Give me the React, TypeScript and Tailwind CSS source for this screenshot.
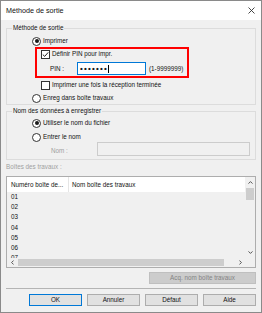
import { useState } from 'react'

function Radio({ checked = false }: { checked?: boolean }) {
  return (
    <span className="flex h-[9px] w-[9px] shrink-0 items-center justify-center rounded-full border border-[#333333] bg-white">
      {checked && <span className="h-[4px] w-[4px] rounded-full bg-[#1a1a1a]" />}
    </span>
  )
}

function Check({ checked = false }: { checked?: boolean }) {
  return (
    <span className="flex h-[9px] w-[9px] shrink-0 items-center justify-center border border-[#333333] bg-white">
      {checked && (
        <svg width="7" height="7" viewBox="0 0 7 7">
          <path d="M0.8 3.6 L2.7 5.4 L6.2 1.4" fill="none" stroke="#222" strokeWidth="1" />
        </svg>
      )}
    </span>
  )
}

function Button({ label, isDefault = false }: { label: string; isDefault?: boolean }) {
  return (
    <button
      type="button"
      className={`flex h-[12px] w-[53px] items-center justify-center bg-[#e1e1e1] text-[#111] ${
        isDefault ? 'border border-[#0078d7]' : 'border border-[#adadad]'
      }`}
    >
      {label}
    </button>
  )
}

const rows = ['01', '02', '03', '04', '05', '06', '07']

export default function App() {
  const [pin] = useState('•••••••')

  return (
    <div className="flex h-[313px] w-[262px] flex-col border border-[#8a8a8a] bg-[#f0f0f0] font-['Liberation_Sans',Arial,sans-serif] text-[6.3px] leading-[8px] text-[#111]">
      {/* barre de titre */}
      <div className="flex h-[19px] shrink-0 items-center justify-between bg-white pl-[5px] pr-[5px]">
        <span className="text-[7.2px]">Méthode de sortie</span>
        <svg width="7" height="7" viewBox="0 0 7 7" className="mr-[1px]">
          <path d="M0.5 0.5 L6.5 6.5 M6.5 0.5 L0.5 6.5" stroke="#333" strokeWidth="0.9" />
        </svg>
      </div>

      <div className="flex flex-col px-[5px]">
        {/* Méthode de sortie */}
        <fieldset className="mt-[4px] h-[81px] border border-[#dcdcdc]">
          <legend className="ml-[5px] px-[1px] leading-[8px]">Méthode de sortie</legend>
          <div className="mt-[4px] flex h-[10px] items-center gap-[2px] pl-[25px]">
            <Radio checked />
            <span>Imprimer</span>
          </div>
          <div className="ml-[28px] mt-[1px] h-[31px] w-[154px] border-2 border-[#ff0000]">
            <div className="flex h-[10px] items-center gap-[2px] pl-[4px]">
              <Check checked />
              <span>Définir PIN pour impr.</span>
            </div>
            <div className="mt-[3px] flex h-[13px] items-center pl-[13px]">
              <span className="w-[27px]">PIN :</span>
              <div className="flex h-[13px] w-[69px] items-center border border-[#0078d7] bg-white pl-[2px]">
                <span className="text-[8px] font-bold leading-[8px] tracking-[1.2px] text-[#1a1a1a]">{pin}</span>
                <span className="h-[8px] w-[1px] bg-black" />
              </div>
              <span className="ml-[3px]">(1-9999999)</span>
            </div>
          </div>
          <div className="mt-[2px] flex h-[10px] items-center gap-[2px] pl-[34px]">
            <Check />
            <span>Imprimer une fois la réception terminée</span>
          </div>
          <div className="mt-[3px] flex h-[10px] items-center gap-[2px] pl-[25px]">
            <Radio />
            <span>Enreg dans boîte travaux</span>
          </div>
        </fieldset>

        {/* Nom des données */}
        <fieldset className="mt-[2px] h-[53px] border border-[#dcdcdc]">
          <legend className="ml-[5px] px-[1px] leading-[8px]">Nom des données à enregistrer</legend>
          <div className="mt-[3px] flex h-[10px] items-center gap-[2px] pl-[25px]">
            <Radio checked />
            <span>Utiliser le nom du fichier</span>
          </div>
          <div className="mt-[4px] flex h-[10px] items-center gap-[2px] pl-[25px]">
            <Radio />
            <span>Entrer le nom</span>
          </div>
          <div className="flex h-[14px] items-center pl-[44px]">
            <span className="mt-[3px] w-[46px] text-[#a0a0a0]">Nom :</span>
            <div className="h-[14px] w-[153px] border border-[#cccccc] bg-[#f0f0f0]" />
          </div>
        </fieldset>

        <div className="mt-[2px] flex h-[10px] items-center text-[#a0a0a0]">Boîtes des travaux :</div>

        {/* liste */}
        <div className="mt-[4px] grid h-[92px] w-[250px] grid-cols-[1fr_10px] grid-rows-[1fr_9px] border border-[#adadad] bg-[#f0f0f0]">
          <div className="overflow-hidden">
            <div className="flex h-[15px] items-center bg-white">
              <span className="w-[61px] pl-[4px]">Numéro boîte de...</span>
              <span className="h-[15px] w-[1px] bg-[#e5e5e5]" />
              <span className="pl-[3px]">Nom boîte des travaux</span>
            </div>
            {rows.map((r) => (
              <div key={r} className="flex h-[10.2px] items-center pl-[4px]">
                {r}
              </div>
            ))}
          </div>
          <div className="flex flex-col bg-[#f0f0f0]">
            <div className="flex h-[11px] items-center justify-center">
              <svg width="5" height="3" viewBox="0 0 5 3">
                <path d="M0.5 2.6 L2.5 0.6 L4.5 2.6" fill="none" stroke="#444" strokeWidth="0.9" />
              </svg>
            </div>
            <div className="mx-[1px] h-[12px] bg-[#cdcdcd]" />
            <div className="flex-1" />
            <div className="flex h-[11px] items-center justify-center">
              <svg width="5" height="3" viewBox="0 0 5 3">
                <path d="M0.5 0.4 L2.5 2.4 L4.5 0.4" fill="none" stroke="#444" strokeWidth="0.9" />
              </svg>
            </div>
          </div>
          <div className="flex items-center">
            <div className="flex h-[9px] w-[11px] items-center justify-center">
              <svg width="3" height="5" viewBox="0 0 3 5">
                <path d="M2.6 0.5 L0.6 2.5 L2.6 4.5" fill="none" stroke="#444" strokeWidth="0.9" />
              </svg>
            </div>
            <div className="h-[7px] w-[206px] bg-[#cdcdcd]" />
            <div className="flex-1" />
            <div className="flex h-[9px] w-[10px] items-center justify-center">
              <svg width="3" height="5" viewBox="0 0 3 5">
                <path d="M0.4 0.5 L2.4 2.5 L0.4 4.5" fill="none" stroke="#444" strokeWidth="0.9" />
              </svg>
            </div>
          </div>
          <div className="bg-[#f0f0f0]" />
        </div>

        <div className="mt-[4px] flex justify-end">
          <div className="flex h-[12px] w-[107px] items-center justify-center border border-[#bfbfbf] bg-[#cccccc] text-[#838383]">
            Acq. nom boîte travaux
          </div>
        </div>

        <div className="mt-[4px] h-[1px] bg-[#b4b4b4]" />

        <div className="mt-[5px] flex justify-end gap-[5px]">
          <Button label="OK" isDefault />
          <Button label="Annuler" />
          <Button label="Défaut" />
          <Button label="Aide" />
        </div>
      </div>
    </div>
  )
}
